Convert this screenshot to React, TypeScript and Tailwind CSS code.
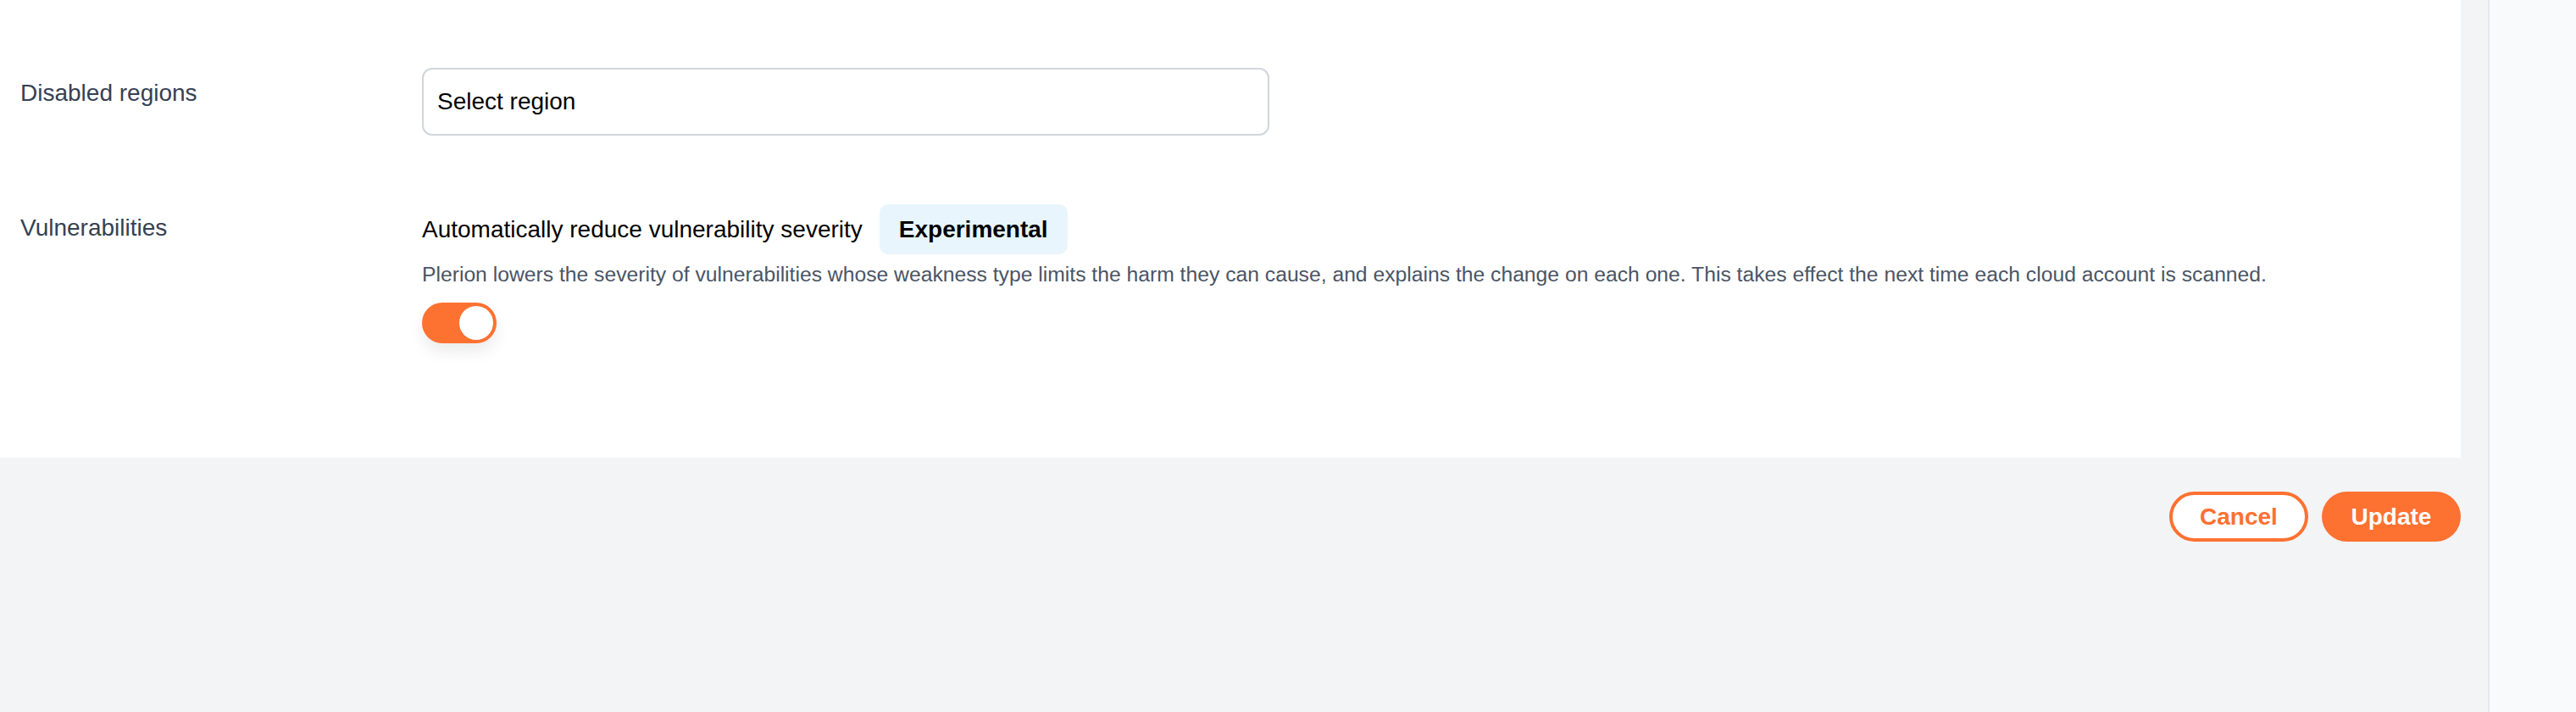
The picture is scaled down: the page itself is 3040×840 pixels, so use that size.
import { useState } from "react"

const font = { fontFamily: '"Liberation Sans", Arial, sans-serif' }

function Toggle({ on, onChange }: { on: boolean; onChange: () => void }) {
  return (
    <button
      type="button"
      onClick={onChange}
      aria-pressed={on}
      className={`flex h-[48px] w-[88px] items-center rounded-full p-[4px] shadow-[0_10px_18px_rgba(0,0,0,0.08)] ${
        on ? "justify-end bg-[#fd7131]" : "justify-start bg-gray-300"
      }`}
    >
      <span className="h-[40px] w-[40px] rounded-full bg-white" />
    </button>
  )
}

export default function App() {
  const [reduceSeverity, setReduceSeverity] = useState(true)

  return (
    <div className="flex h-[840px] w-full" style={font}>
      <main className="flex-1 bg-gray-100 pr-[32px]">
        {/* Settings panel */}
        <section className="bg-white px-[24px] pb-[135px] pt-[80px]">
          <div className="grid grid-cols-[474px_1fr]">
            <div className="pt-[10px] text-[28px] leading-[40px] text-gray-700">Disabled regions</div>
            <div>
              <div className="flex h-[80px] w-[1000px] items-center rounded-[12px] border-2 border-gray-300 px-[16px] text-[28px] text-black">
                Select region
              </div>
            </div>

            <div className="mt-[81px] pt-[8px] text-[28px] leading-[40px] text-gray-700">Vulnerabilities</div>
            <div className="mt-[81px]">
              <div className="flex h-[59px] items-center">
                <span className="text-[28px] leading-[40px] text-black">Automatically reduce vulnerability severity</span>
                <span className="ml-[20px] flex h-[59px] items-center rounded-[10px] bg-[#e8f5fc] px-[23px] text-[28px] font-bold text-black">
                  Experimental
                </span>
              </div>
              <p className="mt-[8px] text-[24.7px] leading-[32px] text-gray-600">
                Plerion lowers the severity of vulnerabilities whose weakness type limits the harm they can cause, and
                explains the change on each one. This takes effect the next time each cloud account is scanned.
              </p>
              <div className="mt-[17px]">
                <Toggle on={reduceSeverity} onChange={() => setReduceSeverity((v) => !v)} />
              </div>
            </div>
          </div>
        </section>

        {/* Actions */}
        <div className="mt-[40px] flex justify-end gap-[16px]">
          <button className="h-[59px] w-[164px] rounded-full border-[4px] border-[#fd7131] bg-white text-[28px] font-bold text-[#fd7131]">
            Cancel
          </button>
          <button className="h-[59px] w-[164px] rounded-full bg-[#fd7131] text-[28px] font-bold text-white">Update</button>
        </div>
      </main>
      <aside className="w-[104px] border-l-2 border-gray-200 bg-gray-50" />
    </div>
  )
}
